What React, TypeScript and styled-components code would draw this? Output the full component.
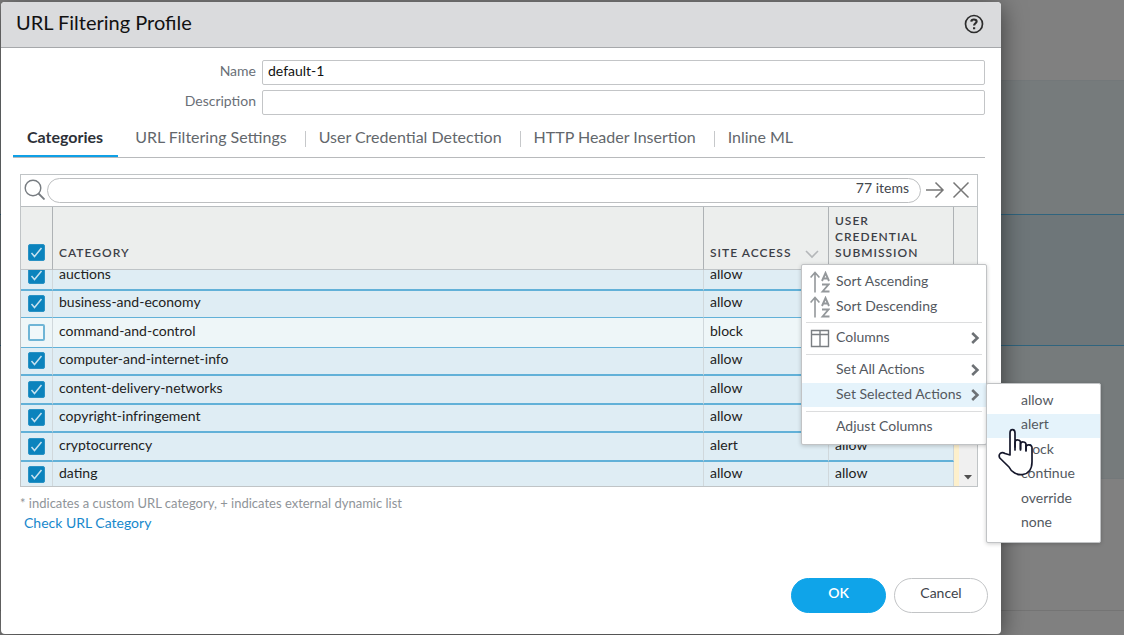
import React from "react";
import styled, { createGlobalStyle, css } from "styled-components";

const Global = createGlobalStyle`
  *, *::before, *::after { box-sizing: border-box; }
  body { margin: 0; background: #808080; font-family: Lato, "Liberation Sans", sans-serif; font-size: 14px; line-height: 16px; color: #222; }
  button, input { font: inherit; color: inherit; }
`;

const Page = styled.div`
  display: grid;
  min-height: 100vh;
  overflow: hidden;
  background: #808080;
`;

const Backdrop = styled.div`
  grid-area: 1 / 1;
  display: flex;
  flex-direction: column;
`;

const Band = styled.div<{ $size: number; $fill: string; $line: string }>`
  flex: none;
  height: ${(p) => p.$size}px;
  background: ${(p) => p.$fill};
  border-bottom: 1px solid ${(p) => p.$line};
`;

const Dialog = styled.section`
  grid-area: 1 / 1;
  display: flex;
  flex-direction: column;
  margin: 2px 123px 1px 1px;
  background: #fff;
  border-radius: 4px;
  box-shadow: 0 4px 24px rgba(0, 0, 0, 0.55);
  position: relative;
`;

const TitleBar = styled.header`
  display: flex;
  align-items: center;
  justify-content: space-between;
  height: 46px;
  padding: 0 17px 1px 15px;
  background: #dadbdd;
  border-bottom: 1px solid #a6a8ab;
  border-radius: 4px 4px 0 0;
`;

const Title = styled.h1`
  margin: 0;
  padding-bottom: 4px;
  font-size: 20px;
  line-height: 24px;
  font-weight: 400;
  color: #111;
`;

const IconButton = styled.button`
  display: flex;
  padding: 0;
  border: 0;
  background: none;
  color: #777;
`;

const Fields = styled.div`
  display: flex;
  flex-direction: column;
  gap: 5px;
  padding: 12px 16px 0 12px;
`;

const Field = styled.label`
  display: grid;
  grid-template-columns: 243px 1fr;
  column-gap: 6px;
  color: #6a6f77;
  text-align: right;
  line-height: 21px;
`;

const TextInput = styled.input`
  height: 25px;
  min-width: 0;
  padding: 0 5px 4px;
  border: 1px solid #c3c5c7;
  border-radius: 2px;
  color: #111;
  outline: 0;
`;

const Tabs = styled.nav`
  display: flex;
  gap: 3px;
  margin: 4px 16px 0 12px;
  height: 39px;
  border-bottom: 1px solid #b8babc;
`;

const Tab = styled.button<{ $active?: boolean }>`
  position: relative;
  height: 38px;
  padding: 0 15px 0 14px;
  border: 0;
  border-bottom: 2px solid transparent;
  background: none;
  font-size: 16px;
  white-space: nowrap;
  color: #63676c;
  & + &::before {
    content: "";
    position: absolute;
    left: 0;
    top: 12px;
    height: 16px;
    border-left: 1px solid #c6c8ca;
  }
  ${(p) =>
    p.$active &&
    css`
      border-color: #0fa0e6;
      font-weight: 700;
      color: #2d3138;
    `}
`;

const Panel = styled.div`
  margin: 16px 23px 0 19px;
  border: 1px solid #c0c4c6;
`;

const SearchBar = styled.div`
  display: flex;
  align-items: center;
  height: 31px;
  padding: 0 7px 2px 3px;
  gap: 2px;
`;

const SearchPill = styled.label`
  display: flex;
  align-items: center;
  flex: 1;
  min-width: 0;
  height: 25px;
  margin-top: 2px;
  padding: 0 11px 5px;
  border: 1px solid #bdbfc1;
  border-radius: 13px;
  color: #43474d;
  input { flex: 1; min-width: 0; border: 0; outline: 0; background: none; }
`;

const Viewport = styled.div`
  display: flex;
  height: 280px;
  overflow: hidden;
  border-top: 1px solid #b9bdc0;
`;

const Grid = styled.table`
  flex: 1;
  align-self: flex-start;
  table-layout: fixed;
  border-spacing: 0;
`;

const HeadCell = styled.th`
  height: 63px;
  padding: 0 6px 8px;
  vertical-align: bottom;
  text-align: left;
  background: #eceeed;
  border-right: 1px solid #aeb2b5;
  border-bottom: 1px solid #bfc4c7;
  font-size: 12px;
  font-weight: 600;
  letter-spacing: 1px;
  color: #3c4047;
`;

const HeadLabel = styled.span`
  display: flex;
  align-items: flex-end;
  justify-content: space-between;
  padding-right: 3px;
`;

const Row = styled.tr<{ $on: boolean }>`
  background: ${(p) => (p.$on ? "#dfedf4" : "#eef6f8")};
`;

const Cell = styled.td<{ $line: number }>`
  padding: 0 6px;
  border-right: 1px solid #d0d8dc;
  border-bottom: ${(p) => p.$line}px solid #62b1d8;
  color: #222;
`;

const Clip = styled.div<{ $h: number; $box?: boolean }>`
  display: flex;
  align-items: flex-end;
  height: ${(p) => p.$h}px;
  padding-bottom: ${(p) => (p.$box ? 5 : 7) + (p.$h > 28 ? 1 : 0)}px;
  overflow: hidden;
`;

const Tick = styled.input`
  appearance: none;
  display: block;
  flex: none;
  width: 17px;
  height: 17px;
  margin: 0 0 0 1px;
  border: 2px solid #6fb5d6;
  border-radius: 2px;
  background: #f1f8fa;
  &:checked {
    border: 1px solid #2a92c4;
    background: #0b83bd url("data:image/svg+xml,%3Csvg xmlns='http://www.w3.org/2000/svg' viewBox='0 0 15 15'%3E%3Cpath d='M2.500 8 5.500 11.500 12.500 3' fill='none' stroke='%23c5e1ef' stroke-width='1.500'/%3E%3C/svg%3E");
  }
`;

const ScrollSide = styled.div`
  display: flex;
  flex-direction: column;
  width: 23px;
`;

const ScrollHead = styled.div`
  height: 63px;
  background: #eceeed;
  border-bottom: 1px solid #bfc4c7;
`;

const ScrollTrack = styled.div`
  display: flex;
  align-items: flex-end;
  justify-content: center;
  flex: 1;
  padding: 0 0 6px;
  border-left: 5px solid #fdf0cc;
  background: #f0f0f0;
`;

const Note = styled.p`
  margin: 8px 0 0 19px;
  font-size: 13px;
  color: #8f9499;
`;

const Link = styled.a`
  align-self: flex-start;
  margin: 4px 0 0 23px;
  color: #1788cc;
  text-decoration: none;
`;

const Footer = styled.footer`
  display: flex;
  justify-content: flex-end;
  gap: 8px;
  margin-top: auto;
  padding: 0 13px 21px;
`;

const Pill = styled.button<{ $primary?: boolean }>`
  width: ${(p) => (p.$primary ? 95 : 94)}px;
  height: 35px;
  padding: 0 0 6px;
  border-radius: 18px;
  border: 1px solid ${(p) => (p.$primary ? "#0fa4e9" : "#c2c4c6")};
  background: ${(p) => (p.$primary ? "#0fa4e9" : "#fff")};
  color: ${(p) => (p.$primary ? "#fff" : "#3e434b")};
  font-weight: ${(p) => (p.$primary ? 600 : 400)};
`;

const MenuBox = styled.div`
  position: absolute;
  display: flex;
  flex-direction: column;
  background: #fff;
  border: 1px solid #c1c3c5;
  border-radius: 2px;
  box-shadow: 0 1px 4px rgba(0, 0, 0, 0.2);
`;

const ContextMenu = styled(MenuBox)`
  top: 262px;
  right: 14px;
  width: 186px;
  padding: 4px 0 5px;
  gap: 1px;
`;

const SubMenu = styled(MenuBox)`
  top: 381px;
  right: -100px;
  width: 115px;
  padding: 6px 0;
`;

const MenuItem = styled.button<{ $lit?: boolean }>`
  display: grid;
  grid-template-columns: 20px 1fr 10px;
  align-items: center;
  column-gap: 6px;
  width: 100%;
  height: 24px;
  padding: 0 6px 2px 8px;
  border: 0;
  background: ${(p) => (p.$lit ? "#e5f3fb" : "none")};
  color: #54595f;
  text-align: left;
  white-space: nowrap;
  > svg { margin-top: 2px; }
`;

const SubItem = styled(MenuItem)`
  grid-template-columns: 1fr;
  padding: 0 0 4px 34px;
  &:nth-child(even):not(:last-child) { margin-bottom: 1px; }
`;

const Rule = styled.hr`
  width: calc(100% - 8px);
  height: 1px;
  margin: 3px 4px 2px;
  border: 0;
  background: #dcddde;
`;

const Pointer = styled.svg`
  position: absolute;
  top: 426px;
  right: -33px;
`;

const SortIcon = () => (
  <svg width="20" height="22" viewBox="0 0 20 22" fill="none" stroke="#94989b" strokeWidth="1.6">
    <path d="M5 21.500V2M.600 6.500 5 1.500 9.400 6.500" />
    <path strokeWidth="1.900" d="M12 10 15.500 2 19 10M13.500 7.500H17.500" />
    <path strokeWidth="1.800" d="M12 13.500H18.500L12.500 20.500H19.500" />
  </svg>
);

const ColumnsIcon = () => (
  <svg width="20" height="19" viewBox="0 0 20 19" fill="none" stroke="#7b7f83" strokeWidth="1.4">
    <path d="M1.500 1.500H18.500V17.500H1.500ZM1.500 5.500H18.500M10 1.500V17.500" />
  </svg>
);

const Chevron = () => (
  <svg width="10" height="12" viewBox="0 0 10 12" fill="none" stroke="#6d7175" strokeWidth="2.6">
    <path d="M2.200 1 7.400 6 2.200 11" />
  </svg>
);

const rows = [
  { name: "auctions", site: "allow", cred: "", on: true, h: 19, line: 2 },
  { name: "business-and-economy", site: "allow", cred: "", on: true, h: 26, line: 1 },
  { name: "command-and-control", site: "block", cred: "", on: false, h: 29, line: 1 },
  { name: "computer-and-internet-info", site: "allow", cred: "", on: true, h: 26, line: 2 },
  { name: "content-delivery-networks", site: "allow", cred: "", on: true, h: 27, line: 2 },
  { name: "copyright-infringement", site: "allow", cred: "", on: true, h: 26, line: 2 },
  { name: "cryptocurrency", site: "alert", cred: "allow", on: true, h: 27, line: 2 },
  { name: "dating", site: "allow", cred: "allow", on: true, h: 26, line: 2 },
];

const tabs = ["Categories", "URL Filtering Settings", "User Credential Detection", "HTTP Header Insertion", "Inline ML"];

export default function App() {
  return (
    <Page>
      <Global />
      <Backdrop aria-hidden>
        <Band $size={81} $fill="#808080" $line="#73787a" />
        <Band $size={134} $fill="#767b7c" $line="#2f647e" />
        <Band $size={131} $fill="#6e7679" $line="#2f647e" />
        <Band $size={133} $fill="#767b7c" $line="#73787a" />
        <Band $size={132} $fill="#808080" $line="#747474" />
      </Backdrop>
      <Dialog role="dialog" aria-labelledby="title">
        <TitleBar>
          <Title id="title">URL Filtering Profile</Title>
          <IconButton aria-label="Help">
            <svg width="20" height="20" viewBox="0 0 20 20" fill="none" stroke="#2c2c2c" strokeWidth="1.7">
              <circle cx="10" cy="10" r="8.500" />
              <path strokeWidth="2.200" d="M7.300 7.600C7.400 4.800 12.600 4.800 12.600 7.500 12.600 9.300 10.100 9.300 10.100 11.600M10.100 13.200V15.200" />
            </svg>
          </IconButton>
        </TitleBar>
        <Fields>
          <Field>
            Name
            <TextInput defaultValue="default-1" />
          </Field>
          <Field>
            Description
            <TextInput />
          </Field>
        </Fields>
        <Tabs>
          {tabs.map((t, i) => (
            <Tab key={t} $active={i === 0}>{t}</Tab>
          ))}
        </Tabs>
        <Panel>
          <SearchBar>
            <svg width="21" height="21" viewBox="0 0 21 21" fill="none" stroke="#777c81" strokeWidth="1.4">
              <circle cx="9" cy="9" r="7.800" />
              <path d="M14.500 14.500 20.500 20.500" strokeWidth="1.800" />
            </svg>
            <SearchPill>
              <input aria-label="Search categories" />
              <span>77 items</span>
            </SearchPill>
            <IconButton aria-label="Apply filter">
              <svg width="27" height="20" viewBox="0 0 27 20" fill="none" stroke="currentColor" strokeWidth="1.500">
                <path d="M3 10H20M12.500 2.500 20 10 12.500 17.500" />
              </svg>
            </IconButton>
            <IconButton aria-label="Clear filter">
              <svg width="18" height="18" viewBox="0 0 18 18" fill="none" stroke="currentColor" strokeWidth="1.500">
                <path d="M1.500 1.500 16.500 16.500M16.500 1.500 1.500 16.500" />
              </svg>
            </IconButton>
          </SearchBar>
          <Viewport>
            <Grid>
              <colgroup>
                <col style={{ width: 32 }} />
                <col />
                <col style={{ width: 125 }} />
                <col style={{ width: 125 }} />
              </colgroup>
              <thead>
                <tr>
                  <HeadCell><Tick type="checkbox" defaultChecked aria-label="Select all" /></HeadCell>
                  <HeadCell>CATEGORY</HeadCell>
                  <HeadCell>
                    <HeadLabel>
                      SITE ACCESS
                      <svg width="14" height="14" viewBox="0 0 14 14" fill="none" stroke="#b4b7b9" strokeWidth="1.600">
                        <path d="M1 4 7 10 13 4" />
                      </svg>
                    </HeadLabel>
                  </HeadCell>
                  <HeadCell>USER CREDENTIAL SUBMISSION</HeadCell>
                </tr>
              </thead>
              <tbody>
                {rows.map((r) => (
                  <Row key={r.name} $on={r.on}>
                    <Cell $line={r.line}>
                      <Clip $h={r.h} $box><Tick type="checkbox" defaultChecked={r.on} aria-label={r.name} /></Clip>
                    </Cell>
                    {[r.name, r.site, r.cred].map((text, i) => (
                      <Cell key={i} $line={r.line}><Clip $h={r.h}>{text}</Clip></Cell>
                    ))}
                  </Row>
                ))}
              </tbody>
            </Grid>
            <ScrollSide>
              <ScrollHead />
              <ScrollTrack>
                <svg width="8" height="5" viewBox="0 0 8 5"><path d="M0 0H8L4 4.500Z" fill="#505050" /></svg>
              </ScrollTrack>
            </ScrollSide>
          </Viewport>
        </Panel>
        <Note>* indicates a custom URL category, + indicates external dynamic list</Note>
        <Link href="#check">Check URL Category</Link>
        <Footer>
          <Pill $primary>OK</Pill>
          <Pill>Cancel</Pill>
        </Footer>
        <ContextMenu role="menu">
          <MenuItem role="menuitem"><SortIcon />Sort Ascending</MenuItem>
          <MenuItem role="menuitem"><SortIcon />Sort Descending</MenuItem>
          <Rule />
          <MenuItem role="menuitem"><ColumnsIcon />Columns<Chevron /></MenuItem>
          <Rule />
          <MenuItem role="menuitem"><span />Set All Actions<Chevron /></MenuItem>
          <MenuItem role="menuitem" $lit><span />Set Selected Actions<Chevron /></MenuItem>
          <Rule />
          <MenuItem role="menuitem"><span />Adjust Columns</MenuItem>
        </ContextMenu>
        <SubMenu role="menu">
          {["allow", "alert", "block", "continue", "override", "none"].map((a) => (
            <SubItem key={a} role="menuitem" $lit={a === "alert"}>{a}</SubItem>
          ))}
        </SubMenu>
        <Pointer width="36" height="48" viewBox="0 0 36 48" fill="#fff" stroke="#15172b" strokeWidth="1.700" strokeLinejoin="round" strokeLinecap="round">
          <path d="M12 27V5C12 .500 17 .500 17 5V19V14C17.500 11 22.500 11.500 22.500 14.500V21V16C23 13 28 13.500 28 16.500V22V19C28.500 16 33.500 16 34 19.500V34C34 50 16 50 11 39L1.800 30C-.200 26 3.500 23 7 25.500Z" />
          <path fill="none" d="M17 14V22M22.500 15V22M28 17V23" />
        </Pointer>
      </Dialog>
    </Page>
  );
}
